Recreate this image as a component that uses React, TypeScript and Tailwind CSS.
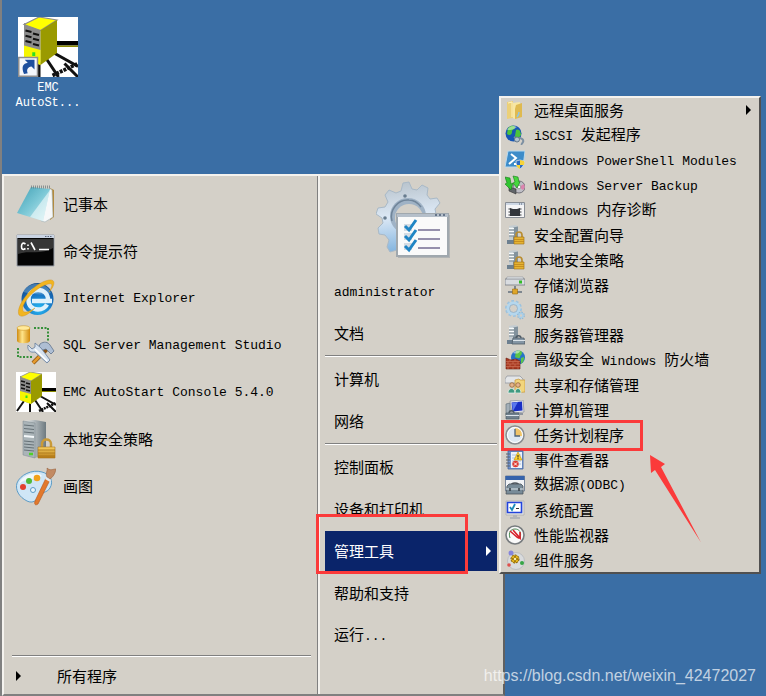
import type { ReactNode } from "react"

const Svg = ({ size, box, children }: { size: "lg" | "sm"; box: number; children: ReactNode }) => (
  <svg
    viewBox={`0 0 ${box} ${box}`}
    className={size === "lg" ? "size-10 shrink-0" : "size-5 shrink-0"}
    fill="none"
    aria-hidden="true"
  >
    {children}
  </svg>
)

/* ---------- large icons, 40 x 40 ---------- */

const EmcArt = () => (
  <>
    <path d="M0 0h40v40H0z" fill="#fff" />
    <path d="M25 16h15v3H25z" fill="#000" />
    <path d="M25 19h15v1H25z" fill="#8a8a00" />
    <path d="M24 24l16 9M19 28l8 12M14 30v10M8 29L1 39M31 31l9 9" stroke="#111" strokeWidth="2" />
    <path d="M23 39l17-8" stroke="#111" strokeWidth="2.500" strokeDasharray="2 0.700" />
    <path d="M4 4l11 4v24L4 28z" fill="#8c8c8c" />
    <path d="M4 5L14 0l12 2-11 7z" fill="#ff0" stroke="#8c8c8c" strokeWidth="0.8" />
    <path d="M15 9l11-7v22l-11 8z" fill="#9a9a00" />
    <path d="M4 19l11 3v10L4 28z" fill="#f6f600" />
    <path d="M5 9l4 1M10 11l4 1M5 12.500l4 1M10 14.500l4 1M5 16l4 1M10 18l4 1" stroke="#111" strokeWidth="1.400" />
    <path d="M10.500 23.500v2.500" stroke="#2ddf20" strokeWidth="2" />
  </>
)

const EmcIcon = () => (
  <Svg size="lg" box={40}>
    <EmcArt />
  </Svg>
)

const EmcShortcut = () => (
  <svg viewBox="0 0 40 40" className="size-15" fill="none" aria-hidden="true">
    <EmcArt />
    <path d="M.5 27h12.500v12.500H.5z" fill="#f4f7fb" stroke="#8f8f8f" strokeWidth="1" />
    <path d="M4 38c-2-5-.5-7 2.500-7.500L4.500 28.500H11V35l-2-2c-2.500.5-3.500 2-2.500 4.500z" fill="#1d4f9d" />
  </svg>
)

const NotepadIcon = () => (
  <Svg size="lg" box={40}>
    <defs>
      <linearGradient id="pad" x1="0" y1="0" x2="1" y2="1">
        <stop offset="0" stopColor="#3f9fb4" />
        <stop offset="0.5" stopColor="#7cc8d6" />
        <stop offset="1" stopColor="#d4eff4" />
      </linearGradient>
    </defs>
    <path d="M34 4l4 2v27l-4 3z" fill="#b38a3c" />
    <path d="M33 4l3 2 1 27-8 5-4-1z" fill="#f6f8f9" stroke="#9fb0b6" strokeWidth="0.6" />
    <path d="M15 3l19 2-7 32L1 29z" fill="url(#pad)" />
    <path d="M34 6l-7 31-13-4z" fill="#f4fbfc" opacity="0.600" />
    <path d="M15 3h19" stroke="#69777a" strokeWidth="3" strokeDasharray="1 1" opacity="0.700" />
  </Svg>
)

const CmdIcon = () => (
  <Svg size="lg" box={40}>
    <path d="M1 4h37v31H1z" fill="#050505" stroke="#9ba1aa" />
    <path d="M1 4h37v3H1z" fill="#c9d3e2" />
    <path d="M29 5.500h7" stroke="#59657a" strokeDasharray="1.500 1" />
    <path d="M2 8h35v9C27 24 12 19 2 23z" fill="#4b4b4b" opacity="0.700" />
    <path d="M9.500 13c-3-2-4 0-4 2.500s1 4 4 2M12 13.500v1.500M12 17v1.500M15 11.500l4 7.500M23 18.500h10" stroke="#fff" strokeWidth="1.600" />
  </Svg>
)

const IeIcon = () => (
  <Svg size="lg" box={40}>
    <defs>
      <radialGradient id="ie" cx="0.55" cy="0.8" r="0.8">
        <stop offset="0" stopColor="#27b9f4" />
        <stop offset="0.6" stopColor="#176fbf" />
        <stop offset="1" stopColor="#144a86" />
      </radialGradient>
    </defs>
    <circle cx="21.500" cy="21" r="16" fill="url(#ie)" />
    <path d="M7 14C13 3 30 3 35 15c-8 3-18 1-28-1z" fill="#8dbfe2" opacity="0.400" />
    <path
      d="M36 23H16M32 22c0-6-4-10-10-10s-9.500 4-9.500 10 4 9.500 9.500 9.500c4 0 7-1.500 9-5"
      stroke="#dff1fb"
      strokeWidth="4.500"
    />
    <path d="M3 37C-1 29 16 5 33 2c8-1 5 7 0 12 4-7 4-9-1-8C18 10 4 27 7 33c2 3 9-1 12-3C12 37 6 40 3 37z" fill="#f2b51f" stroke="#cf8d12" strokeWidth="0.4" />
  </Svg>
)

const SqlIcon = () => (
  <Svg size="lg" box={40}>
    <defs>
      <linearGradient id="db">
        <stop offset="0" stopColor="#cf8a10" />
        <stop offset="0.4" stopColor="#ffe58a" />
        <stop offset="1" stopColor="#d38a0a" />
      </linearGradient>
    </defs>
    <path d="M18 3h14v13M2 23v9h14" stroke="#37903a" strokeWidth="2" strokeDasharray="2 1.500" />
    <path d="M1 3v13c1 3 12 3 13 0V3z" fill="url(#db)" />
    <ellipse cx="7.500" cy="3" rx="6.500" ry="2.300" fill="#ffe99a" stroke="#c78c17" strokeWidth="0.5" />
    <path d="M17 38l16-16" stroke="#8c5414" strokeWidth="4" />
    <path d="M17 38l9-9" stroke="#e49a2e" strokeWidth="2.500" />
    <path d="M24 19c4-3 8-2 10 1l4 6-3 3-5-5-3 1-4-3z" fill="#aebed3" stroke="#61748d" strokeWidth="0.8" />
    <path d="M12 20l4 4 3-2v-4l6 5 9 12-3 3-12-11c-5 1-8-2-7-7z" fill="#d7e2ef" stroke="#6e84a2" strokeWidth="0.9" />
    <path d="M19 24l12 12" stroke="#fff" strokeWidth="1.500" />
  </Svg>
)

const SecurityIcon = () => (
  <Svg size="lg" box={40}>
    <defs>
      <linearGradient id="tower">
        <stop offset="0" stopColor="#f2f6f7" />
        <stop offset="1" stopColor="#6e7a80" />
      </linearGradient>
      <linearGradient id="gold" x1="0" y1="0" x2="0" y2="1">
        <stop offset="0" stopColor="#f8d264" />
        <stop offset="1" stopColor="#b87b14" />
      </linearGradient>
    </defs>
    <path d="M7 2l12-1 11 2v32l-11 4-12-3z" fill="url(#tower)" />
    <path d="M7 2l12 2v35L7 36z" fill="#aab4b8" stroke="#7b878c" strokeWidth="0.5" />
    <path d="M8 6l10 1M8 9.500l10 1M8 13l10 1M8 22l10 1M8 25l10 1M8 28l10 1M8 31l10 1" stroke="#5e696e" strokeWidth="0.9" />
    <path d="M8 17l10 1" stroke="#f4f8fa" strokeWidth="2" />
    <path d="M13 35h4" stroke="#4fd12a" strokeWidth="2.500" />
    <path d="M26 29v-4c0-6 9-6 9 0v4" stroke="#c99a38" strokeWidth="2.500" />
    <path d="M22 28h17v11H22z" fill="url(#gold)" stroke="#a8741b" strokeWidth="0.6" />
    <path d="M22 31h17M22 34h17M22 37h17" stroke="#a8741b" strokeWidth="0.8" />
  </Svg>
)

const PaintIcon = () => (
  <Svg size="lg" box={40}>
    <path
      d="M26 6c8 2 12 9 8 16-3 5-9 4-11 8s-6 8-12 5C3 31-1 24 1 17 4 9 16 3 26 6z"
      fill="#cfe6f6"
      stroke="#5c9bc6"
    />
    <path d="M24 8C14 6 5 11 3 18c6-6 17-4 23-8z" fill="#fff" opacity="0.700" />
    <circle cx="7" cy="21" r="3" fill="#e2402f" />
    <circle cx="13" cy="15" r="3" fill="#4fb93a" />
    <circle cx="21" cy="12" r="3.300" fill="#f2a11c" />
    <circle cx="17" cy="24" r="2.500" fill="#eaf5fc" stroke="#5c9bc6" />
    <path d="M30 12l4 2-12 24c-3 2-4 0-3-3z" fill="#e2792d" stroke="#b3551b" strokeWidth="0.6" />
    <path d="M31 11c-2-4 1-6 0-9 3 3 6 1 9 1-1 5-3 8-6 10z" fill="#c28a63" stroke="#996340" strokeWidth="0.6" />
    <path d="M30 11l5 3-1 2-5-3z" fill="#e6eaec" />
  </Svg>
)

const AdminToolsIcon = () => (
  <svg viewBox="0 0 76 78" className="h-[78px] w-[76px]" fill="none" aria-hidden="true">
    <defs>
      <linearGradient id="gear" x1="0.2" y1="0" x2="0.3" y2="1">
        <stop offset="0" stopColor="#b7c2cb" />
        <stop offset="0.5" stopColor="#dce8f5" />
        <stop offset="1" stopColor="#82b4df" />
      </linearGradient>
    </defs>
    <path
      d="M27 2l6-1 3 7 5 1 5-5 6 3-1 7 3 4 7-1 3 5-5 6 1 5v32H21v4l-7 2-3-5 2-7-4-5-6-1-1-6 5-5-1-5-6-4 2-6 7-1 3-5-3-7 4-5 7 3 5-2z"
      fill="url(#gear)"
      stroke="#a9b9c7"
      strokeLinejoin="round"
    />
    <circle cx="32" cy="35" r="18" fill="#9fb2c5" />
    <circle cx="33" cy="37" r="14" fill="#d4d0c8" />
    <path d="M16 40c-3-11 6-22 17-21 6 0 9 3 12 7" stroke="#6f8499" strokeWidth="1.500" />
    <circle cx="29" cy="15" r="1.800" fill="#687c8f" />
    <circle cx="9" cy="37" r="1.800" fill="#687c8f" />
    <path d="M22 34h52v43H22z" fill="#8f989f" opacity="0.500" />
    <path d="M21 33h51v42H21z" fill="#fafafa" stroke="#a0a8ae" strokeWidth="2" />
    <path d="M21 33h51v3H21z" fill="#b5bfca" />
    <path d="M59 34h12" stroke="#66758a" strokeWidth="2" strokeDasharray="2 2" />
    <path d="M28 43h8v7h-8zM28 52h8v7h-8zM28 62h8v7h-8z" fill="#d5dce4" />
    <path d="M29 45l4 4 7-10M29 55l4 4 7-10M29 65l4 4 7-10" stroke="#2085c4" strokeWidth="3" />
    <path d="M42 49h22M42 58h22M42 67h22" stroke="#9690ac" strokeWidth="2" />
  </svg>
)

/* ---------- small icons, 20 x 20 ---------- */

const FolderIcon = () => (
  <Svg size="sm" box={20}>
    <path d="M2 2l6-1v17l-6 1z" fill="#ecd078" />
    <path d="M8 3l7-1v12l-5 5-2-1z" fill="#f7e7a3" />
    <path d="M11 5l6-2v14l-7 2V9z" fill="#dfba50" />
    <path d="M3 3l4-1v15" stroke="#fff3bd" />
    <path d="M14 12c0 2 0 3-2 5" stroke="#8ac6e8" strokeWidth="1.500" />
  </Svg>
)

const IscsiIcon = () => (
  <Svg size="sm" box={20}>
    <circle cx="8.500" cy="8.500" r="8" fill="#1656b4" />
    <path d="M3 3c4-4 8-2 7 0s-3 1-3 4-3 4-5 2zM11 5c3-2 5 2 5 5l-4 5-2-4z" fill="#4cc33c" />
    <path d="M2 5C4 1 9 0 12 2 9 5 5 5 2 5z" fill="#fff" opacity="0.450" />
    <path d="M9 12l5 3M14 13c3 0 5 2 4 4s-2 2-1 3" stroke="#7d90a2" strokeWidth="2" />
    <circle cx="12" cy="14.500" r="2.500" fill="#b3c2cf" stroke="#63788c" />
  </Svg>
)

const PowerShellIcon = () => (
  <Svg size="sm" box={20}>
    <path d="M3 1h17l-2 16H0z" fill="#3d8cc9" stroke="#b7d9ef" />
    <path d="M6 4l5 4-7 6M9 14h4" stroke="#fff" strokeWidth="2" />
    <path d="M11 11l4-1 4 1c0 4-1 6-4 8-3-2-4-4-4-8z" fill="#2b6cc4" stroke="#eee" strokeWidth="0.7" />
    <path d="M15 10v5h4c0-1 1-2 0-4zM15 15h-4c1 2 2 3 4 4z" fill="#f6d33a" />
  </Svg>
)

const BackupIcon = () => (
  <Svg size="sm" box={20}>
    <circle cx="14" cy="12" r="6" fill="#bfbfc6" stroke="#73737b" />
    <path d="M14 12l5-3c1 3 1 4-1 6z" fill="#dc83ae" />
    <circle cx="14" cy="12" r="1.800" fill="#fff" stroke="#777" strokeWidth="0.600" />
    <path d="M4 12l7 2v5l-7-3z" fill="#62666a" stroke="#333" strokeWidth="0.6" />
    <path d="M0 2l5 1 1 6 2-1-2 7-6-6 2-1z" fill="#30c530" stroke="#167a18" strokeWidth="0.6" />
    <path d="M15 7l-3 6-4-5 2-1-2-6 5 1 1 5z" fill="#46d73d" stroke="#167a18" strokeWidth="0.6" />
  </Svg>
)

const MemoryIcon = () => (
  <Svg size="sm" box={20}>
    <path d="M0.500 2.500h19v15H.5z" fill="#f5f5f6" stroke="#888d94" />
    <path d="M1 3h18v2H1z" fill="#cdd7e4" />
    <path d="M14 4h4" stroke="#526174" strokeDasharray="1 1" />
    <path d="M5 8l3 1h4l3-1v8H5z" fill="#33363b" />
    <path d="M3.500 9h2M3.500 12h2M3.500 15h2M14.500 9h2M14.500 12h2M14.500 15h2" stroke="#33363b" />
  </Svg>
)

const ServerBody = () => (
  <>
    <path d="M4 1l6-1 3 1v15l-5 3-4-2z" fill="#c3ccd1" />
    <path d="M8 2.500l5-1V16l-5 3z" fill="#82929d" />
    <path d="M4 3.500h5M4 6.500h5M4 9.500h5" stroke="#f7fafb" strokeWidth="1.500" />
    <path d="M4 5h4M4 8h4M4 11h4" stroke="#6c7b85" strokeWidth="0.800" />
  </>
)

const ServerLockIcon = () => (
  <Svg size="sm" box={20}>
    <ServerBody />
    <path d="M2 15h8v4H2z" fill="#6d8090" />
    <path d="M11 13v-3c0-4 6-4 6 0v3" stroke="#b98d31" strokeWidth="1.700" />
    <path d="M9 12h10v7H9z" fill="#e5b332" stroke="#9a6b12" strokeWidth="0.6" />
    <path d="M9 14.500h10M9 16.500h10" stroke="#b98019" strokeWidth="0.700" />
  </Svg>
)

const StorageExplorerIcon = () => (
  <Svg size="sm" box={20}>
    <path d="M2 2h16l2 5H0z" fill="#eceef0" stroke="#9499a0" strokeWidth="0.7" />
    <path d="M0 4h20v6H0z" fill="#d9dce0" stroke="#696f77" strokeWidth="0.7" />
    <path d="M14 7h3" stroke="#32bb27" strokeWidth="3" />
    <path d="M10 11v5M3 17h14" stroke="#626f7c" strokeWidth="1.500" />
    <path d="M7.500 14h5v5h-5z" fill="#dea629" stroke="#9a6b12" strokeWidth="0.6" />
  </Svg>
)

const ServicesIcon = () => (
  <Svg size="sm" box={20}>
    <circle cx="8.500" cy="8.500" r="7.500" stroke="#9cc3df" strokeWidth="2" strokeDasharray="2.700 2" />
    <circle cx="8.500" cy="8.500" r="5.500" stroke="#b4d7ee" strokeWidth="3" />
    <circle cx="8.500" cy="8.500" r="4" stroke="#86a9c6" strokeWidth="0.700" />
    <circle cx="16" cy="15.500" r="3.200" stroke="#8db9d9" strokeWidth="1.400" strokeDasharray="1.500 1" />
    <circle cx="16" cy="15.500" r="2" stroke="#a7cfea" strokeWidth="1.500" />
  </Svg>
)

const ServerManagerIcon = () => (
  <Svg size="sm" box={20}>
    <ServerBody />
    <path d="M2 15h7v4H2z" fill="#6d8090" />
    <path d="M11 13c0-3 5-3 5 0" stroke="#4e5b66" strokeWidth="1.300" />
    <path d="M8 13h11l1 6H7z" fill="#8496a5" stroke="#4e5b66" strokeWidth="0.8" />
    <path d="M8 15.500h12" stroke="#dce4ea" />
  </Svg>
)

const FirewallIcon = () => (
  <Svg size="sm" box={20}>
    <circle cx="13" cy="7.500" r="7" fill="#2672c7" />
    <path d="M11 1c4-1 6 0 6 2s-2 2-2 4-3 1-5 0zM16 8l3-1c0 4-1 5-3 7z" fill="#5cc548" />
    <path d="M8 3c2-2 5-3 7-2-1 3-4 3-7 2z" fill="#fff" opacity="0.500" />
    <path d="M1 8l5 2 5-1 4 2v8H1z" fill="#a83a22" stroke="#6b1f10" strokeWidth="0.6" />
    <path d="M1 11.500h14M1 14h14M1 16.500h14M5 9v2.500M10 9v2.500M3 11.500V14M8 11.500V14M13 11.500V14M5 14v2.500M10 14v2.500M3 16.500V19M8 16.500V19M13 16.500V19" stroke="#d07a60" strokeWidth="0.6" />
  </Svg>
)

const ShareIcon = () => (
  <Svg size="sm" box={20}>
    <path d="M2 1h13l3 3v4H0V4z" fill="#e3e5e7" stroke="#8b9098" strokeWidth="0.7" />
    <path d="M10 5l4-1 1 1h5v12l-10 1z" fill="#f2d57c" stroke="#c5973a" strokeWidth="0.7" />
    <circle cx="7" cy="10" r="2.300" fill="#e5b48c" stroke="#8c5a2c" strokeWidth="0.7" />
    <circle cx="13" cy="10" r="2.300" fill="#e5b48c" stroke="#8c5a2c" strokeWidth="0.7" />
    <path d="M3 18c0-6 7-6 7 0zM10 18c0-6 6-6 6 0z" fill="#3f9a81" stroke="#e9f4ef" strokeWidth="0.7" />
  </Svg>
)

const ComputerIcon = () => (
  <Svg size="sm" box={20}>
    <path d="M1 4l4-1v12H1z" fill="#a3afb8" stroke="#65727c" strokeWidth="0.700" />
    <path d="M5 1l13-1 1 12-12 1z" fill="#e8eaee" stroke="#878d98" strokeWidth="0.7" />
    <path d="M6.500 2.500L17 1.500l.5 9-10 1z" fill="#1a2fc4" />
    <path d="M7 3l6-1-5 9z" fill="#5a78ee" />
    <path d="M4 13c0-3 5-3 5 0" stroke="#4e5b66" strokeWidth="1.300" />
    <path d="M1 13h13v6H1z" fill="#71818e" stroke="#4e5b66" strokeWidth="0.7" />
    <path d="M1 15.500h13" stroke="#dce4ea" />
    <path d="M14 14h4" stroke="#8f96a0" strokeWidth="2" />
  </Svg>
)

const ClockIcon = () => (
  <Svg size="sm" box={20}>
    <circle cx="10" cy="10" r="9" fill="#dde8f2" stroke="#8a8d90" strokeWidth="1.500" />
    <path d="M10 11V2.500c5 0 7.500 4 7.500 8.500z" fill="#f0c468" />
    <circle cx="10" cy="10" r="7.500" stroke="#fff" />
    <path d="M10 4v7h5" stroke="#4d6479" strokeWidth="1.300" />
  </Svg>
)

const EventIcon = () => (
  <Svg size="sm" box={20}>
    <path d="M3 1h15v18H3z" fill="#7395cf" stroke="#43629c" strokeWidth="0.8" />
    <path d="M6 2h11v16H6z" fill="#edf3fb" />
    <path d="M7 5h9M7 8h9M7 11h9M7 14h9" stroke="#9db4d6" strokeWidth="0.8" />
    <path d="M1 4h4M1 7h4M1 10h4M1 13h4M1 16h4" stroke="#5e646c" />
    <path d="M13 2l4 8H9z" fill="#ffd42b" stroke="#bc8b0f" strokeWidth="0.6" />
    <path d="M13 5v2.500M13 8.200v1" stroke="#222" />
    <circle cx="10.500" cy="14" r="3.200" fill="#df3b32" />
    <path d="M9 12.500l3 3M12 12.500l-3 3" stroke="#fff" />
  </Svg>
)

const OdbcIcon = () => (
  <Svg size="sm" box={20}>
    <path d="M.5 1h19v15H.5z" fill="#f1f3f6" stroke="#7a8798" />
    <path d="M.5 1h19v4H.5z" fill="#3663ab" />
    <path d="M6 11c0-4 8-4 8 0" stroke="#4b545c" strokeWidth="1.500" />
    <path d="M2 11l2-2h12l2 2v8H1z" fill="#788b98" stroke="#4b545c" strokeWidth="0.8" />
    <path d="M1 14h17" stroke="#dde6ec" />
    <path d="M5 13v3M14 13v3" stroke="#343c43" strokeWidth="1.500" />
  </Svg>
)

const ConfigIcon = () => (
  <Svg size="sm" box={20}>
    <path d="M1 1h18v14H1z" fill="#e3e3e3" stroke="#aaa" strokeWidth="0.700" />
    <path d="M2.500 2.500h14v10h-14z" fill="#fff" stroke="#2344dc" strokeWidth="1.600" />
    <path d="M5 7l2 3 3-6" stroke="#1a8ab8" strokeWidth="1.800" />
    <path d="M11 8.500h3" stroke="#333" />
    <path d="M8 15h4v2h3v2H5v-2h3z" fill="#b3b5b8" />
  </Svg>
)

const PerfIcon = () => (
  <Svg size="sm" box={20}>
    <circle cx="10" cy="10" r="9" fill="#fafafa" stroke="#777b7e" strokeWidth="1.600" />
    <path d="M5 13c-2-6 1-9 5-9s7 3 5 9" stroke="#4c8a55" />
    <path d="M5 6l8 7M8 5l7 8V7M13 13h3" stroke="#d8202a" strokeWidth="1.600" />
  </Svg>
)

const ComponentIcon = () => (
  <Svg size="sm" box={20}>
    <circle cx="11" cy="11" r="8.500" fill="#d9dbdd" stroke="#bcbec1" />
    <circle cx="6" cy="3" r="2.500" fill="#8585dc" />
    <circle cx="4" cy="15" r="1.800" fill="#e0504b" />
    <circle cx="17" cy="13" r="2" fill="#37a545" />
    <circle cx="10" cy="9" r="4" fill="#e8b71d" stroke="#755409" strokeDasharray="2 1" />
    <path d="M10 6v6M7 9h6" stroke="#5e4307" />
    <circle cx="10" cy="9" r="1.200" fill="#fff2b0" />
  </Svg>
)

/* ---------- data ---------- */

const pinned = [
  { name: "记事本", Icon: NotepadIcon },
  { name: "命令提示符", Icon: CmdIcon },
  { name: "Internet Explorer", Icon: IeIcon },
  { name: "SQL Server Management Studio", Icon: SqlIcon },
  { name: "EMC AutoStart Console 5.4.0", Icon: EmcIcon },
  { name: "本地安全策略", Icon: SecurityIcon },
  { name: "画图", Icon: PaintIcon },
]

const places = [["administrator", "文档"], ["计算机", "网络"], ["控制面板", "设备和打印机", "管理工具", "帮助和支持", "运行..."]]

const tools = [
  { name: "远程桌面服务", Icon: FolderIcon },
  { name: "iSCSI 发起程序", Icon: IscsiIcon },
  { name: "Windows PowerShell Modules", Icon: PowerShellIcon },
  { name: "Windows Server Backup", Icon: BackupIcon },
  { name: "Windows 内存诊断", Icon: MemoryIcon },
  { name: "安全配置向导", Icon: ServerLockIcon },
  { name: "本地安全策略", Icon: ServerLockIcon },
  { name: "存储浏览器", Icon: StorageExplorerIcon },
  { name: "服务", Icon: ServicesIcon },
  { name: "服务器管理器", Icon: ServerManagerIcon },
  { name: "高级安全 Windows 防火墙", Icon: FirewallIcon },
  { name: "共享和存储管理", Icon: ShareIcon },
  { name: "计算机管理", Icon: ComputerIcon },
  { name: "任务计划程序", Icon: ClockIcon },
  { name: "事件查看器", Icon: EventIcon },
  { name: "数据源(ODBC)", Icon: OdbcIcon },
  { name: "系统配置", Icon: ConfigIcon },
  { name: "性能监视器", Icon: PerfIcon },
  { name: "组件服务", Icon: ComponentIcon },
]

// Latin runs are set a little smaller so that they keep pace with the Chinese glyphs
const Label = ({ text }: { text: string }) => (
  <span className="whitespace-pre">
    {text.split(/([ -~]+)/).map((part, i) =>
      i % 2 ? (
        <span key={i} className="font-['Liberation_Mono',monospace] text-[13px]">
          {part}
        </span>
      ) : (
        part
      )
    )}
  </span>
)

const Triangle = () => (
  <svg viewBox="0 0 5 10" className="h-2.5 w-[5px] shrink-0" aria-hidden="true">
    <path d="M0 0l5 5-5 5z" fill="currentColor" />
  </svg>
)

const Groove = () => <hr className="my-px h-0.5 border-0 border-t border-b border-t-[#808080] border-b-white" />

const PlaceItem = ({ name }: { name: string }) => {
  const active = name === "管理工具"
  return (
    <button
      className={
        active
          ? "relative flex h-[42px] w-full items-center justify-between border-y border-[#d4d0c8] bg-[#0a246a] pr-1.5 pl-[9px] text-white"
          : "flex h-[42px] w-full items-center pl-[9px]"
      }
    >
      <Label text={name} />
      {active && <Triangle />}
      {active && <span className="absolute -top-[17px] -left-[9px] h-[60px] w-[152px] border-3 border-[#fb3a3a]" />}
    </button>
  )
}

const ToolsMenu = () => (
  <nav className="absolute -top-20 left-[495px] w-[262px] border-2 border-t-[#f4f2ee] border-r-[#505050] border-b-[#505050] border-l-[#f4f2ee] bg-[#d4d0c8]">
    <ul className="flex h-[474px] flex-col">
      {tools.map(({ name, Icon }, i) => (
        <li key={name} className="relative flex-1">
          <button className="flex h-full w-full items-center gap-[9px] pr-2 pl-1">
            <Icon />
            <Label text={name} />
            {i === 0 && (
              <span className="ml-auto">
                <Triangle />
              </span>
            )}
          </button>
          {name === "任务计划程序" && (
            <span className="absolute -top-0.5 left-0 h-[31px] w-[142px] border-3 border-[#fb3a3a]">
              <svg viewBox="0 0 54 88" className="absolute top-8 left-[145px] h-[88px] w-[54px]" aria-hidden="true">
                <path d="M1 0l15 9-4 3 40 75.500L6 15l-4 3z" fill="#fb3a3a" />
              </svg>
            </span>
          )}
        </li>
      ))}
    </ul>
  </nav>
)

const App = () => {
  return (
    <main className="relative flex min-h-screen flex-col overflow-hidden border-l-2 border-[#808080] bg-[#3a6ea5] font-['Noto_Sans_CJK_SC',sans-serif] text-[15px] leading-5 text-black">
      <section className="h-[174px] shrink-0 px-[9px] pt-[17px]">
        <button className="flex w-[74px] flex-col items-center font-['Liberation_Mono',monospace] text-xs leading-[15px] text-white">
          <EmcShortcut />
          <span className="mt-1">
            EMC
            <br />
            AutoSt...
          </span>
        </button>
      </section>

      <section className="relative flex w-[503px] grow border-2 border-t-[#f4f2ee] border-r-[#606060] border-b-[#808080] border-l-[#f4f2ee] bg-[#d4d0c8]">
        <div className="flex w-[313px] flex-col pt-1">
          <ul>
            {pinned.map(({ name, Icon }) => (
              <li key={name}>
                <button className="flex h-[47px] w-full items-center gap-[7px] pl-3">
                  <Icon />
                  <Label text={name} />
                </button>
              </li>
            ))}
          </ul>
          <div className="mt-auto pr-1.5 pl-2">
            <Groove />
            <button className="flex h-9 w-full items-center gap-9 pl-1">
              <Triangle />
              <Label text="所有程序" />
            </button>
          </div>
        </div>

        <div className="flex grow flex-col border-l border-[#808080]">
          <div className="grow border-l-2 border-[#f4f2ee] pr-1.5 pl-[5px]">
            <div className="flex h-[94px] justify-center pt-[5px] pl-1.5">
              <AdminToolsIcon />
            </div>
            {places.map((group, i) => (
              <div key={i}>
                {i > 0 && <Groove />}
                {group.map((name) => (
                  <PlaceItem key={name} name={name} />
                ))}
              </div>
            ))}
          </div>
        </div>
        <ToolsMenu />
      </section>

      <p className="absolute right-2.5 bottom-2 font-['Liberation_Sans',sans-serif] text-base text-white/70">
        https://blog.csdn.net/weixin_42472027
      </p>
    </main>
  )
}

export default App
